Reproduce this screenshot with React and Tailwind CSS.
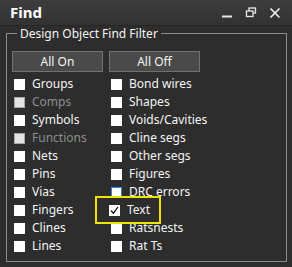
import React from "react";

const left = [
  { t: "Groups" },
  { t: "Comps", d: true },
  { t: "Symbols" },
  { t: "Functions", d: true },
  { t: "Nets" },
  { t: "Pins" },
  { t: "Vias" },
  { t: "Fingers" },
  { t: "Clines" },
  { t: "Lines" },
];
const right = [
  { t: "Bond wires" },
  { t: "Shapes" },
  { t: "Voids/Cavities" },
  { t: "Cline segs" },
  { t: "Other segs" },
  { t: "Figures" },
  { t: "DRC errors", f: true },
  { t: "Text", c: true },
  { t: "Ratsnests" },
  { t: "Rat Ts" },
];

function Box({ d, f, c }) {
  return (
    <div
      className={
        "w-[11px] h-[11px] shrink-0 flex items-center justify-center " +
        (d
          ? "bg-[#e4e4e4] border border-[#a8a8a8]"
          : f
          ? "bg-white border border-[#3b86d6]"
          : "bg-white")
      }
    >
      {c && (
        <svg width="9" height="9" viewBox="0 0 9 9">
          <path d="M1 4.6 L3.4 7.2 L8 1" fill="none" stroke="#000" strokeWidth="1.2" />
        </svg>
      )}
    </div>
  );
}

function Row({ item }) {
  return (
    <div className="h-[18px] flex items-center gap-[7px] pl-[2px]">
      <Box {...item} />
      <span className={"text-[12px] leading-none " + (item.d ? "text-[#8e8e8e]" : "text-[#f4f4f4]")}>
        {item.t}
      </span>
    </div>
  );
}

export default function App() {
  return (
    <div className="w-[292px] h-[267px] bg-[#2d2d2d] relative overflow-hidden font-['Segoe_UI','Noto_Sans',sans-serif]">
      <div className="h-[26px] bg-gradient-to-b from-[#3d3d3d] to-[#323232] border-b border-[#262626] flex items-center justify-between pl-[10px] pr-[11px]">
        <span className="text-white font-bold text-[15px] leading-none">Find</span>
        <div className="flex items-center gap-[12px]">
          <svg width="12" height="12" viewBox="0 0 12 12">
            <path d="M1 9.5 H11" stroke="#e8e8e8" strokeWidth="2" />
          </svg>
          <svg width="12" height="12" viewBox="0 0 12 12">
            <rect x="4" y="1" width="6.5" height="5" fill="none" stroke="#e8e8e8" strokeWidth="1.3" />
            <rect x="1.5" y="4" width="6.5" height="5.5" fill="#333" stroke="#e8e8e8" strokeWidth="1.3" />
          </svg>
          <svg width="12" height="12" viewBox="0 0 12 12">
            <path d="M1.5 1.5 L10.5 10.5 M10.5 1.5 L1.5 10.5" stroke="#f0f0f0" strokeWidth="1.6" />
          </svg>
        </div>
      </div>
      <fieldset className="ml-[6px] mr-[5px] border border-[#8c8c8c] pl-[5px] pb-[6px]">
        <legend className="ml-[5px] px-[3px] text-[12px] leading-[15px] text-[#f4f4f4]">
          Design Object Find Filter
        </legend>
        <div className="flex gap-[6px] mt-[10px]">
          <div className="w-[91px] h-[21px] bg-[#4a4a4a] border border-[#727272] flex items-center justify-center text-[12px] text-[#f4f4f4]">
            All On
          </div>
          <div className="w-[91px] h-[21px] bg-[#4a4a4a] border border-[#727272] flex items-center justify-center text-[12px] text-[#f4f4f4]">
            All Off
          </div>
        </div>
        <div className="flex mt-[3px]">
          <div className="w-[97px] flex flex-col">
            {left.map((i) => (
              <Row key={i.t} item={i} />
            ))}
          </div>
          <div className="flex flex-col relative">
            {right.map((i) =>
              i.c ? (
                <div key={i.t} className="relative h-[18px]">
                  <div className="absolute left-[-14px] top-[-5px] w-[66px] h-[28px] border-2 border-[#f2e200] bg-[#2d2d2d] z-10 flex items-center pl-[10px]">
                    <Row item={i} />
                  </div>
                </div>
              ) : (
                <Row key={i.t} item={i} />
              )
            )}
          </div>
        </div>
      </fieldset>
    </div>
  );
}
